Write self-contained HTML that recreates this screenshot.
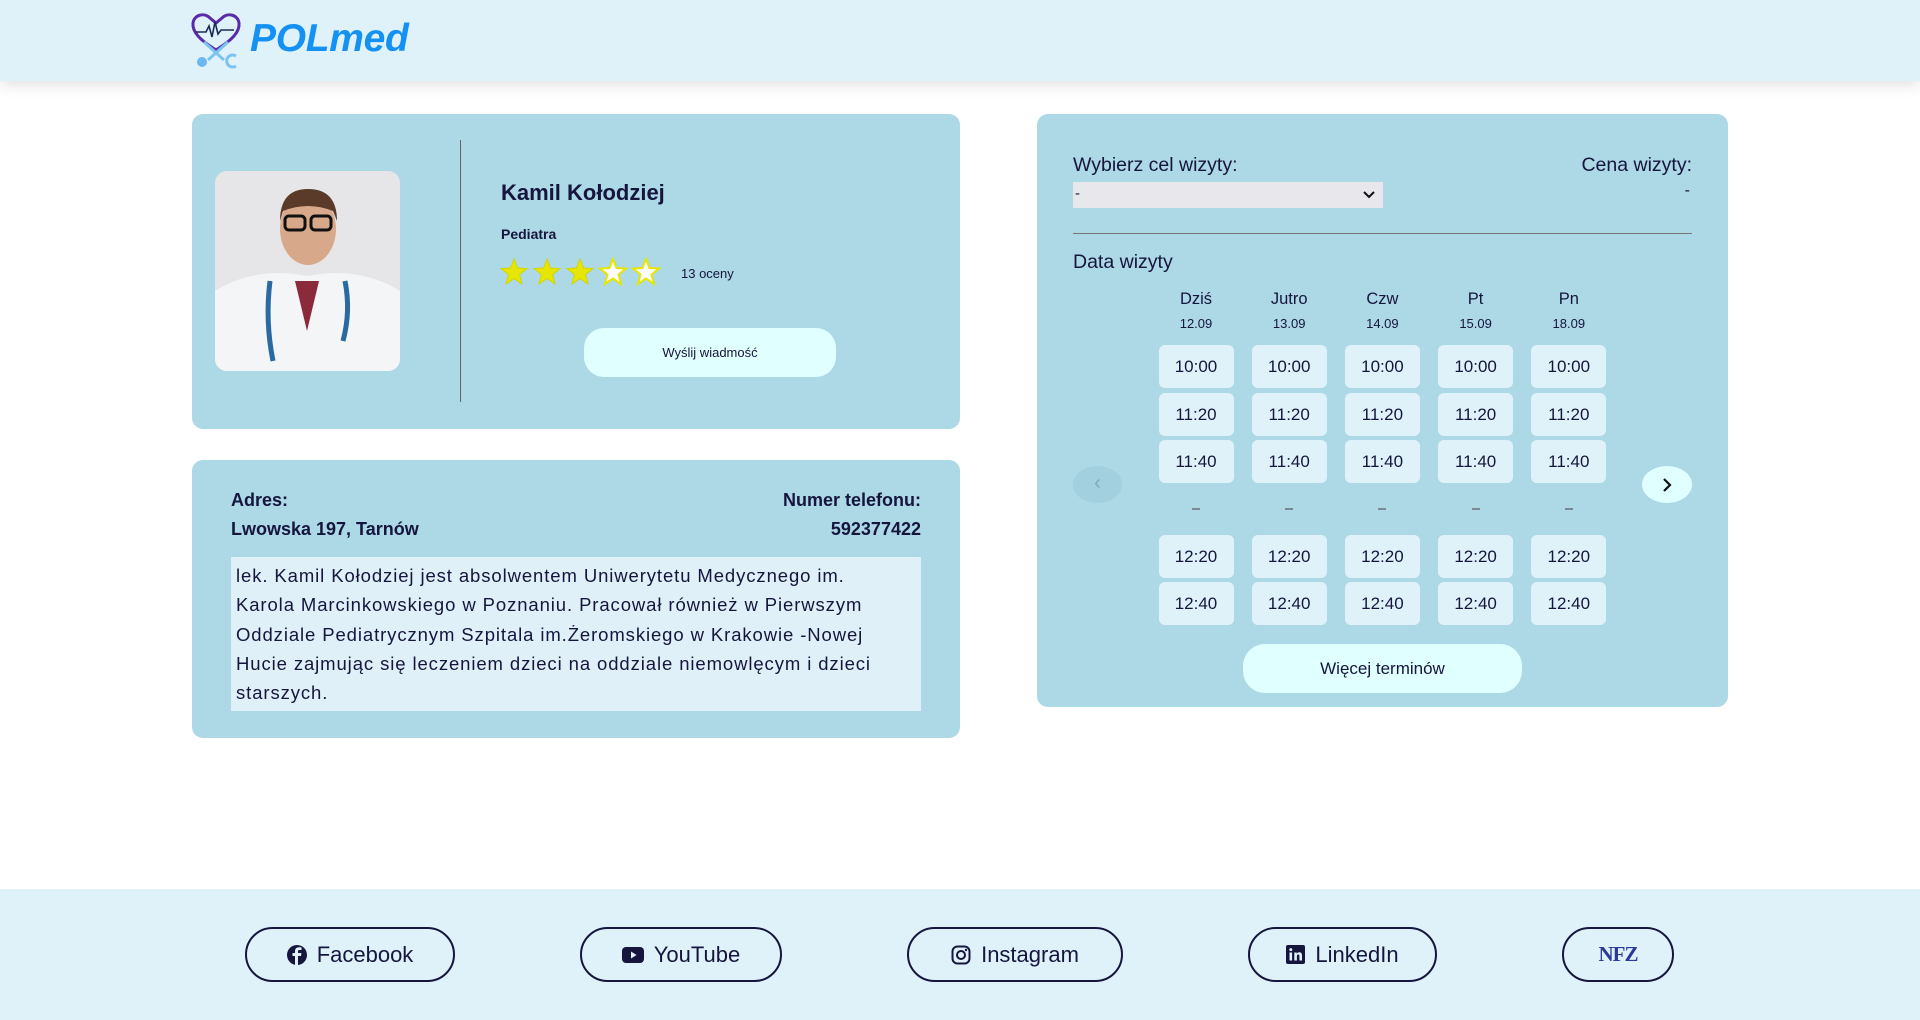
<!DOCTYPE html>
<html><head><meta charset="utf-8"><style>
*{box-sizing:border-box;margin:0;padding:0}
body{width:1920px;height:1020px;background:#fff;font-family:"Liberation Sans",sans-serif;color:#15153d;position:relative;overflow:hidden}
.abs{position:absolute}
header{position:absolute;left:0;top:0;width:1920px;height:81px;background:#dff2fa;box-shadow:0 4px 14px rgba(0,0,0,0.12)}
.card{position:absolute;background:#add8e6;border-radius:11px}
.slot{position:absolute;width:75px;height:43px;background:#dff2fa;border-radius:6px;font-size:17px;text-align:center;line-height:43px}
.fb{position:absolute;top:927px;height:55px;border:2px solid #15153d;border-radius:28px;display:flex;align-items:center;justify-content:center;font-size:22px;gap:10px}
footer{position:absolute;left:0;top:889px;width:1920px;height:131px;background:#dff2fa}
</style></head><body>
<header>
<svg class="abs" style="left:190px;top:12px" width="56" height="58" viewBox="0 0 56 58">
<path d="M26 38 C10 28 2 20 3 11 C4 3 14 0 20 6 L26 11 L32 6 C38 0 48 3 49 11 C50 20 42 28 26 38Z" fill="none" stroke="#5a2aa8" stroke-width="3"/>
<path d="M6 20 H16 L19 14 L22 25 L25 10 L28 22 L31 18 H44" fill="none" stroke="#1b2a5a" stroke-width="1.6"/>
<path d="M14 30 L34 48 M38 30 L18 48" stroke="#7cc4f0" stroke-width="3"/>
<circle cx="12" cy="50" r="5" fill="#6ab8f0"/>
<path d="M46 44 a6 6 0 1 0 0 10" fill="none" stroke="#7cc4f0" stroke-width="3"/>
</svg>
<div class="abs" style="left:250px;top:17px;font-size:39px;font-weight:bold;font-style:italic;color:#1491f2;letter-spacing:-0.3px">POLmed</div>
</header>

<div class="card" style="left:192px;top:114px;width:768px;height:315px">
<svg class="abs" style="left:23px;top:57px" width="185" height="200" viewBox="0 0 185 200">
<defs><clipPath id="c"><rect width="185" height="200" rx="12"/></clipPath></defs>
<g clip-path="url(#c)">
<rect width="185" height="200" fill="#e6e6e8"/>
<path d="M0 200 V120 Q40 95 92 105 Q145 95 185 120 V200Z" fill="#f4f5f7"/>
<path d="M80 110 L92 160 L104 110Z" fill="#8a2a3a"/>
<ellipse cx="93" cy="58" rx="28" ry="36" fill="#d8a88a"/>
<path d="M65 50 Q65 18 93 18 Q122 18 122 50 L118 40 Q93 30 68 40Z" fill="#5a3a28"/>
<rect x="70" y="45" width="20" height="14" rx="4" fill="none" stroke="#111" stroke-width="3"/>
<rect x="96" y="45" width="20" height="14" rx="4" fill="none" stroke="#111" stroke-width="3"/>
<path d="M55 110 Q50 150 58 190" fill="none" stroke="#2a6aa0" stroke-width="5"/>
<path d="M130 110 Q136 140 128 170" fill="none" stroke="#2a6aa0" stroke-width="5"/>
</g></svg>
<div class="abs" style="left:268px;top:26px;width:1px;height:262px;background:#666"></div>
<div class="abs" style="left:309px;top:66px;font-size:22px;font-weight:bold">Kamil Kołodziej</div>
<div class="abs" style="left:309px;top:112px;font-size:14px;font-weight:bold">Pediatra</div>
<svg class="abs" style="left:308px;top:143px" width="170" height="32" viewBox="0 0 170 32">
<defs><path id="s" d="M14 2 L17.5 11 L27 11.5 L19.5 17.5 L22 27 L14 21.5 L6 27 L8.5 17.5 L1 11.5 L10.5 11Z"/></defs>
<use href="#s" x="0" fill="#e6e600" stroke="#d4d400"/>
<use href="#s" x="33" fill="#e6e600" stroke="#d4d400"/>
<use href="#s" x="66" fill="#e6e600" stroke="#d4d400"/>
<use href="#s" x="99" fill="#fff" stroke="#e6e600" stroke-width="2"/>
<use href="#s" x="132" fill="#fff" stroke="#e6e600" stroke-width="2"/>
</svg>
<div class="abs" style="left:489px;top:152px;font-size:13px">13 oceny</div>
<div class="abs" style="left:392px;top:214px;width:252px;height:49px;background:#e0ffff;border-radius:20px;text-align:center;line-height:49px;font-size:13px">Wyślij wiadmość</div>
</div>

<div class="card" style="left:192px;top:460px;width:768px;height:278px">
<div class="abs" style="left:39px;top:30px;font-size:18px;font-weight:bold">Adres:</div>
<div class="abs" style="left:39px;top:59px;font-size:18px;font-weight:bold">Lwowska 197, Tarnów</div>
<div class="abs" style="right:39px;top:30px;font-size:18px;font-weight:bold">Numer telefonu:</div>
<div class="abs" style="right:39px;top:59px;font-size:18px;font-weight:bold">592377422</div>
<div class="abs" style="left:39px;top:97px;width:690px;height:154px;background:#dff0f8;padding:4px 5px;font-size:18.5px;line-height:29.3px;white-space:nowrap;letter-spacing:0.9px;overflow:hidden">lek. Kamil Kołodziej jest absolwentem Uniwerytetu Medycznego im.<br>Karola Marcinkowskiego w Poznaniu. Pracował również w Pierwszym<br>Oddziale Pediatrycznym Szpitala im.Żeromskiego w Krakowie -Nowej<br>Hucie zajmując się leczeniem dzieci na oddziale niemowlęcym i dzieci<br>starszych.</div>
</div>

<div class="card" style="left:1037px;top:114px;width:691px;height:593px">
<div class="abs" style="left:36px;top:40px;font-size:19.5px">Wybierz cel wizyty:</div>
<div class="abs" style="right:36px;top:40px;font-size:19.5px">Cena wizyty:</div>
<div class="abs" style="left:36px;top:68px;width:310px;height:26px;background:#e8e8ec;font-size:15px;padding-left:2px;line-height:24px">-<svg class="abs" style="right:8px;top:9px" width="12" height="8"><path d="M1 1 L6 6 L11 1" fill="none" stroke="#111" stroke-width="2"/></svg></div>
<div class="abs" style="right:38px;top:68px;font-size:16px">-</div>
<div class="abs" style="left:36px;top:119px;width:619px;height:1px;background:#777"></div>
<div class="abs" style="left:36px;top:137px;font-size:19.5px">Data wizyty</div>
</div>

<div class="abs" style="left:1073px;top:466px;width:49px;height:37px;border-radius:50%;background:#a3d0de;color:#7fa8b8;text-align:center;line-height:35px;font-size:20px">‹</div>
<div class="abs" style="left:1642px;top:466px;width:50px;height:37px;border-radius:50%;background:#e0ffff"><svg class="abs" style="left:20px;top:12px" width="10" height="14"><path d="M2 1 L8 7 L2 13" fill="none" stroke="#111" stroke-width="2.2"/></svg></div>

<div class="abs" style="left:1243px;top:644px;width:279px;height:49px;background:#e0ffff;border-radius:22px;text-align:center;line-height:49px;font-size:17px">Więcej terminów</div>

<div id="grid"></div>
<script>
var days=[["Dziś","12.09"],["Jutro","13.09"],["Czw","14.09"],["Pt","15.09"],["Pn","18.09"]];
var rows=[["10:00",366],["11:20",414],["11:40",461],["12:20",556],["12:40",603]];
var h="";
days.forEach(function(d,i){var cx=1196+i*93.2;
h+='<div class="abs" style="left:'+(cx-40)+'px;width:80px;top:290px;text-align:center;font-size:16.5px">'+d[0]+'</div>';
h+='<div class="abs" style="left:'+(cx-40)+'px;width:80px;top:316px;text-align:center;font-size:13px">'+d[1]+'</div>';
rows.forEach(function(r){h+='<div class="slot" style="left:'+(cx-37.5)+'px;top:'+(r[1]-21.5)+'px">'+r[0]+'</div>';});
h+='<div class="abs" style="left:'+(cx-4)+'px;top:508px;width:8px;height:2px;background:#7a8a95"></div>';
});
document.getElementById("grid").innerHTML=h;
</script>

<footer>
<div class="fb" style="left:245px;width:210px;top:38px"><svg width="20" height="20" viewBox="0 0 20 20"><circle cx="10" cy="10" r="10" fill="#15153d"/><path d="M11 20 V11 H14 L14.4 8 H11 V6.3 C11 5.4 11.4 5 12.3 5 H14.5 V2.4 C13.8 2.3 12.8 2.2 12 2.2 C9.6 2.2 8 3.6 8 6 V8 H5.5 V11 H8 V20Z" fill="#dff2fa"/></svg>Facebook</div>
<div class="fb" style="left:580px;width:202px;top:38px"><svg width="22" height="16" viewBox="0 0 22 16"><rect width="22" height="16" rx="4" fill="#15153d"/><path d="M9 4.5 L14.5 8 L9 11.5Z" fill="#dff2fa"/></svg>YouTube</div>
<div class="fb" style="left:907px;width:216px;top:38px"><svg width="20" height="20" viewBox="0 0 20 20"><rect x="1.5" y="1.5" width="17" height="17" rx="5" fill="none" stroke="#15153d" stroke-width="2"/><circle cx="10" cy="10" r="4" fill="none" stroke="#15153d" stroke-width="2"/><circle cx="15" cy="5" r="1.2" fill="#15153d"/></svg>Instagram</div>
<div class="fb" style="left:1248px;width:189px;top:38px"><svg width="19" height="19" viewBox="0 0 19 19"><rect width="19" height="19" rx="2" fill="#15153d"/><rect x="3.5" y="7.5" width="2.6" height="8" fill="#dff2fa"/><circle cx="4.8" cy="4.6" r="1.5" fill="#dff2fa"/><path d="M8.3 7.5 H10.7 V8.7 C11.3 7.7 12.3 7.3 13.3 7.3 C15.2 7.3 16 8.5 16 10.6 V15.5 H13.4 V11 C13.4 10 13 9.5 12.2 9.5 C11.3 9.5 10.9 10.1 10.9 11.2 V15.5 H8.3Z" fill="#dff2fa"/></svg>LinkedIn</div>
<div class="fb" style="left:1562px;width:112px;top:38px"><span style="font-family:'Liberation Serif',serif;font-weight:bold;color:#2a3a9a;font-size:21px;letter-spacing:-1px">NFZ</span></div>
</footer>
</body></html>
